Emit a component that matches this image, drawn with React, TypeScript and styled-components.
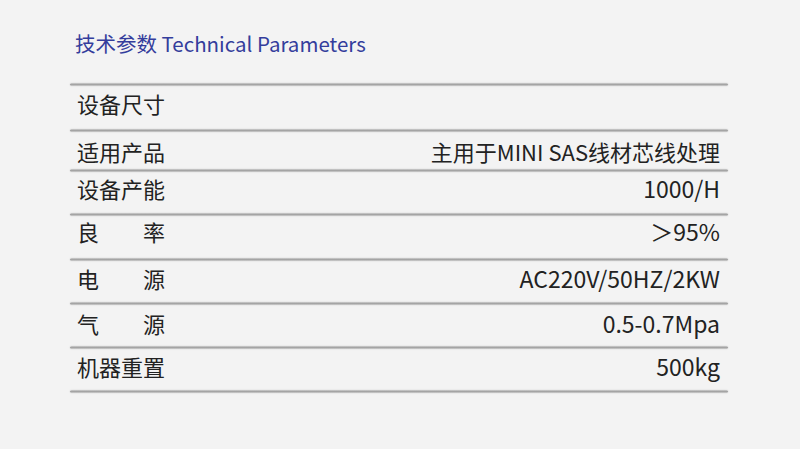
import React from 'react'
import styled, { createGlobalStyle } from 'styled-components'

const GlobalStyle = createGlobalStyle`
  html, body {
    margin: 0;
    padding: 0;
    background: #f3f3f3;
  }
  body {
    font-family: "Noto Sans CJK SC", "Noto Sans", sans-serif;
  }
`

const specs = [
  { label: '设备尺寸', value: '', height: 43, lift: 10 },
  { label: '适用产品', value: '主用于MINI SAS线材芯线处理', height: 37, lift: 0, small: true },
  { label: '设备产能', value: '1000/H', height: 41, lift: 10 },
  { label: '良率', value: '＞95%', height: 42, lift: 12, spread: true },
  { label: '电源', value: 'AC220V/50HZ/2KW', height: 41, lift: 8, spread: true },
  { label: '气源', value: '0.5-0.7Mpa', height: 41, lift: 6, spread: true },
  { label: '机器重置', value: '500kg', height: 41, lift: 8 },
]

const App: React.FC = () => {
  return (
    <>
      <GlobalStyle />
      <StyledPage>
        <StyledTitle>技术参数 Technical Parameters</StyledTitle>
        <StyledTable>
          <StyledDivider />
          {specs.map((s) => (
            <React.Fragment key={s.label}>
              <StyledRow $height={s.height} $lift={s.lift}>
                {s.spread ? (
                  <StyledSpreadLabel>
                    {s.label.split('').map((c) => (
                      <span key={c}>{c}</span>
                    ))}
                  </StyledSpreadLabel>
                ) : (
                  <StyledLabel>{s.label}</StyledLabel>
                )}
                <StyledValue $small={!!s.small}>{s.value}</StyledValue>
              </StyledRow>
              <StyledDivider />
            </React.Fragment>
          ))}
        </StyledTable>
      </StyledPage>
    </>
  )
}

const StyledPage = styled.div`
  width: 800px;
  height: 449px;
  box-sizing: border-box;
  padding: 30px 0 0 70px;
  overflow: hidden;
`

const StyledTitle = styled.div`
  padding-left: 5px;
  font-size: 20.5px;
  line-height: 26px;
  color: #343d9c;
  margin-bottom: 27px;
`

const StyledTable = styled.div`
  width: 658px;
  display: flex;
  flex-direction: column;
`

const StyledDivider = styled.div`
  height: 3px;
  border-radius: 2px;
  background: linear-gradient(#cfcfcf, #a4a4a4 50%, #cfcfcf);
  box-shadow: 0 0 2px rgba(0, 0, 0, 0.12);
`

const StyledRow = styled.div<{ $height: number; $lift: number }>`
  height: ${(p) => p.$height}px;
  box-sizing: border-box;
  display: flex;
  align-items: center;
  justify-content: space-between;
  padding: 0 8px ${(p) => p.$lift}px 7px;
  font-size: 22px;
  color: #222;
`

const StyledLabel = styled.span`
  white-space: nowrap;
`

const StyledSpreadLabel = styled.span`
  width: 88px;
  display: flex;
  justify-content: space-between;
`

const StyledValue = styled.span<{ $small: boolean }>`
  white-space: nowrap;
  font-size: ${(p) => (p.$small ? 22 : 23)}px;
`

export default App
